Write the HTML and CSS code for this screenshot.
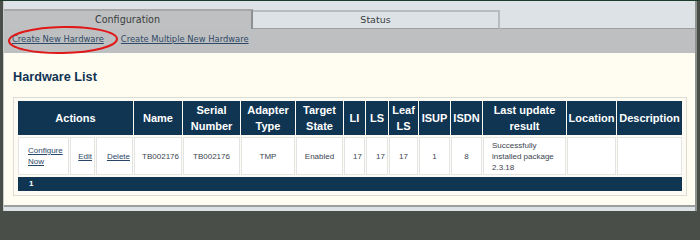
FILE: index.html
```html
<!DOCTYPE html>
<html>
<head>
<meta charset="utf-8">
<link rel="stylesheet" href="styles.css">
</head>
<body>
<div class="topline"></div>
<div class="frame">
  <div class="topstrip"></div>
  <div class="tabs">
    <div class="tab tab-active">Configuration</div>
    <div class="tab tab-idle">Status</div>
    <div class="tab-fill"></div>
  </div>
  <div class="linkbar">
    <a class="bar-link" href="#">Create New Hardware</a>
    <a class="bar-link" href="#">Create Multiple New Hardware</a>
    <svg class="annot" width="116" height="32" viewBox="0 0 116 32">
      <ellipse cx="56" cy="14" rx="54" ry="13" fill="none" stroke="#e01818" stroke-width="2" transform="rotate(-1 56 14)"/>
    </svg>
  </div>
  <div class="content">
    <h2 class="title">Hardware List</h2>
    <div class="box">
      <table class="grid">
        <colgroup>
          <col style="width:51px"><col style="width:25px"><col style="width:37px">
          <col style="width:48px"><col style="width:57px"><col style="width:54px">
          <col style="width:47px"><col style="width:21px"><col style="width:22px">
          <col style="width:29px"><col style="width:31px"><col style="width:31px">
          <col style="width:83px"><col style="width:49px"><col style="width:65px">
        </colgroup>
        <tr class="head">
          <th colspan="3">Actions</th>
          <th>Name</th>
          <th>Serial Number</th>
          <th>Adapter Type</th>
          <th>Target State</th>
          <th>LI</th>
          <th>LS</th>
          <th>Leaf LS</th>
          <th>ISUP</th>
          <th>ISDN</th>
          <th>Last update result</th>
          <th>Location</th>
          <th>Description</th>
        </tr>
        <tr class="data">
          <td class="left"><a href="#">Configure Now</a></td>
          <td class="right"><a href="#">Edit</a></td>
          <td class="right"><a href="#">Delete</a></td>
          <td class="right">TB002176</td>
          <td>TB002176</td>
          <td>TMP</td>
          <td>Enabled</td>
          <td class="right">17</td>
          <td class="right">17</td>
          <td>17</td>
          <td>1</td>
          <td>8</td>
          <td class="result">Successfully installed package 2.3.18</td>
          <td></td>
          <td></td>
        </tr>
        <tr class="foot">
          <td colspan="15">1</td>
        </tr>
      </table>
    </div>
  </div>
  <div class="bottomline"></div>
</div>
</body>
</html>
```
FILE: styles.css
```css
html, body {
  margin: 0;
  padding: 0;
}
body {
  background: #4a4e49;
  width: 700px;
  height: 211px;
  overflow: hidden;
}
.topline {
  height: 1px;
  background: #1d3a2b;
}
.frame {
  margin: 0 3px 0 3px;
  background: #dce2e5;
  border-left: 1px solid #c6cac9;
  border-right: 2px solid #8f9391;
  height: 210px;
  overflow: hidden;
}
.topstrip {
  height: 8px;
}
.tabs {
  display: flex;
  height: 20px;
}
.tab {
  box-sizing: border-box;
  height: 20px;
  font-family: "DejaVu Sans", sans-serif;
  color: #3a3d40;
  text-align: center;
  line-height: 19px;
}
.tab-active {
  width: 249px;
  background: #bfc0c1;
  border-top: 2px solid #a6a8a9;
  border-right: 2px solid #8d8f90;
  font-size: 9.6px;
  line-height: 17px;
}
.tab-idle {
  width: 247px;
  margin-top: 1px;
  height: 19px;
  background: #dce2e5;
  border-top: 2px solid #b7bcbd;
  border-right: 2px solid #b7bcbd;
  border-bottom: 1px solid #9ea1a1;
  font-size: 9.5px;
  line-height: 16px;
}
.tab-fill {
  flex: 1;
  box-sizing: border-box;
  border-bottom: 1px solid #9ea1a1;
}
.linkbar {
  position: relative;
  height: 24px;
  background: #bebfc0;
  display: flex;
  gap: 17px;
  padding-left: 8px;
  font-family: "DejaVu Sans", sans-serif;
  font-size: 8.4px;
  line-height: 20px;
}
.bar-link {
  color: #2e4a68;
  text-decoration: underline;
}
.annot {
  position: absolute;
  left: 3px;
  top: -3px;
}
.content {
  background: #fffcf2;
  height: 152px;
  padding: 17px 7px 0 9px;
  box-sizing: border-box;
}
.title {
  margin: 0 0 12px 0;
  font-family: "Liberation Sans", Arial, sans-serif;
  font-weight: bold;
  font-size: 12.7px;
  line-height: 15px;
  color: #0f3352;
}
.box {
  width: 674px;
  box-sizing: border-box;
  border: 1px solid #dcdcd3;
  padding: 1px 3px 2px 3px;
  background: #fdfbf3;
}
.grid {
  table-layout: fixed;
  width: 666px;
  border-collapse: separate;
  border-spacing: 1px 2px;
  font-family: "Liberation Sans", Arial, sans-serif;
}
.head th {
  height: 34px;
  padding: 0;
  background: #0f3553;
  color: #ffffff;
  font-size: 11px;
  font-weight: bold;
  line-height: 16px;
  text-align: center;
  vertical-align: middle;
}
.data td {
  box-sizing: border-box;
  height: 38px;
  padding: 0 2px;
  background: #ffffff;
  border: 1px solid #e3e5e5;
  font-size: 8px;
  line-height: 11px;
  color: #3b4350;
  text-align: center;
  vertical-align: middle;
}
.data td.left {
  text-align: left;
  padding-left: 9px;
}
.data td.right {
  text-align: right;
  padding-right: 2px;
}
.data td.result {
  text-align: left;
  padding-left: 8px;
  padding-right: 6px;
}
.data a {
  color: #2b4768;
  text-decoration: underline;
}
.foot td {
  height: 14px;
  padding: 0 0 0 11px;
  background: #0f3553;
  color: #ffffff;
  font-size: 8px;
  font-weight: bold;
  line-height: 14px;
}
.bottomline {
  height: 2px;
  background: #9b9e9d;
}
```
